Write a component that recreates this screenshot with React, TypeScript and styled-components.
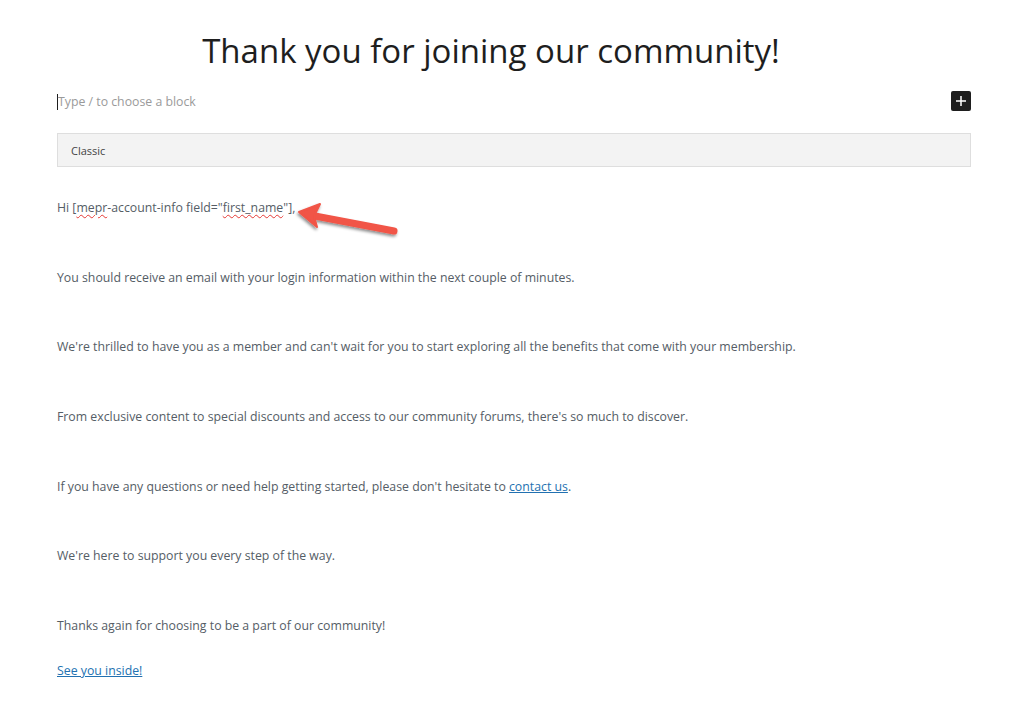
import styled, { createGlobalStyle } from 'styled-components';

const GlobalStyle = createGlobalStyle`
  body {
    margin: 0;
    background: #fff;
    font-family: 'Open Sans', 'Noto Sans', sans-serif;
  }
`;

const Page = styled.div`
  width: 1024px;
  height: 710px;
  overflow: hidden;
  position: relative;
`;

const Title = styled.h1`
  margin: 0;
  padding-top: 29px;
  text-align: center;
  font-weight: 400;
  font-size: 33px;
  line-height: 44px;
  color: #1e1e1e;
  padding-right: 42px;
`;

const Editor = styled.div`
  margin: 0 53px 0 57px;
`;

const Inserter = styled.div`
  display: flex;
  align-items: center;
  justify-content: space-between;
  height: 20px;
  margin-top: 18px;
`;

const Placeholder = styled.span`
  font-size: 12.3px;
  color: #9a9a9a;
  border-left: 1px solid #1e1e1e;
  line-height: 16px;
  margin-top: 2px;
`;

const PlusButton = styled.button`
  width: 20px;
  height: 20px;
  padding: 0;
  border: 0;
  border-radius: 2px;
  background: #1e1e1e;
  display: flex;
  align-items: center;
  justify-content: center;
`;

const ClassicBar = styled.div`
  margin-top: 22px;
  height: 34px;
  box-sizing: border-box;
  background: #f3f3f3;
  border: 1px solid #dedede;
  display: flex;
  align-items: center;
  padding-left: 13px;
  font-size: 11px;
  color: #444;
`;

const Body = styled.div`
  margin-top: 33px;
  display: flex;
  flex-direction: column;
  gap: 53.7px;
  font-size: 12.3px;
  line-height: 16px;
  color: #555d66;
`;

const Para = styled.p<{ $tight?: boolean }>`
  margin: 0;
  margin-top: ${(p) => (p.$tight ? '-25px' : '0')};
`;

const Misspelled = styled.span`
  text-decoration: underline wavy #e53935;
  text-decoration-thickness: 1px;
  text-underline-offset: 2px;
`;

const TextLink = styled.a`
  color: #2271b1;
  text-decoration: underline;
`;

const Arrow = styled.svg`
  position: absolute;
  left: 293px;
  top: 200px;
  overflow: visible;
`;

const App = () => {
  return (
    <Page>
      <GlobalStyle />
      <Title>Thank you for joining our community!</Title>
      <Editor>
        <Inserter>
          <Placeholder>Type / to choose a block</Placeholder>
          <PlusButton aria-label="Add block">
            <svg width="12" height="12" viewBox="0 0 12 12">
              <path d="M6 1v10M1 6h10" stroke="#fff" strokeWidth="1.5" />
            </svg>
          </PlusButton>
        </Inserter>
        <ClassicBar>Classic</ClassicBar>
        <Body>
          <Para>
            Hi [<Misspelled>mepr</Misspelled>-account-info field="<Misspelled>first_name</Misspelled>"],
          </Para>
          <Para>You should receive an email with your login information within the next couple of minutes.</Para>
          <Para>
            We're thrilled to have you as a member and can't wait for you to start exploring all the benefits that come
            with your membership.
          </Para>
          <Para>From exclusive content to special discounts and access to our community forums, there's so much to discover.</Para>
          <Para>
            If you have any questions or need help getting started, please don't hesitate to{' '}
            <TextLink href="#">contact us</TextLink>.
          </Para>
          <Para>We're here to support you every step of the way.</Para>
          <Para>Thanks again for choosing to be a part of our community!</Para>
          <Para $tight>
            <TextLink href="#">See you inside!</TextLink>
          </Para>
        </Body>
      </Editor>
      <Arrow width="110" height="40" viewBox="0 0 110 40">
        <defs>
          <filter id="shadow" x="-20%" y="-50%" width="140%" height="200%">
            <feDropShadow dx="-1" dy="2" stdDeviation="1.5" floodColor="#000" floodOpacity="0.45" />
          </filter>
        </defs>
        <g filter="url(#shadow)">
          <path d="M22 16 L101 31" stroke="#f15446" strokeWidth="7" strokeLinecap="round" />
          <path d="M6 12 L27 4 L21 16 L24 27 Z" fill="#f15446" stroke="#f15446" strokeWidth="2" strokeLinejoin="round" />
        </g>
      </Arrow>
    </Page>
  );
};

export default App;
